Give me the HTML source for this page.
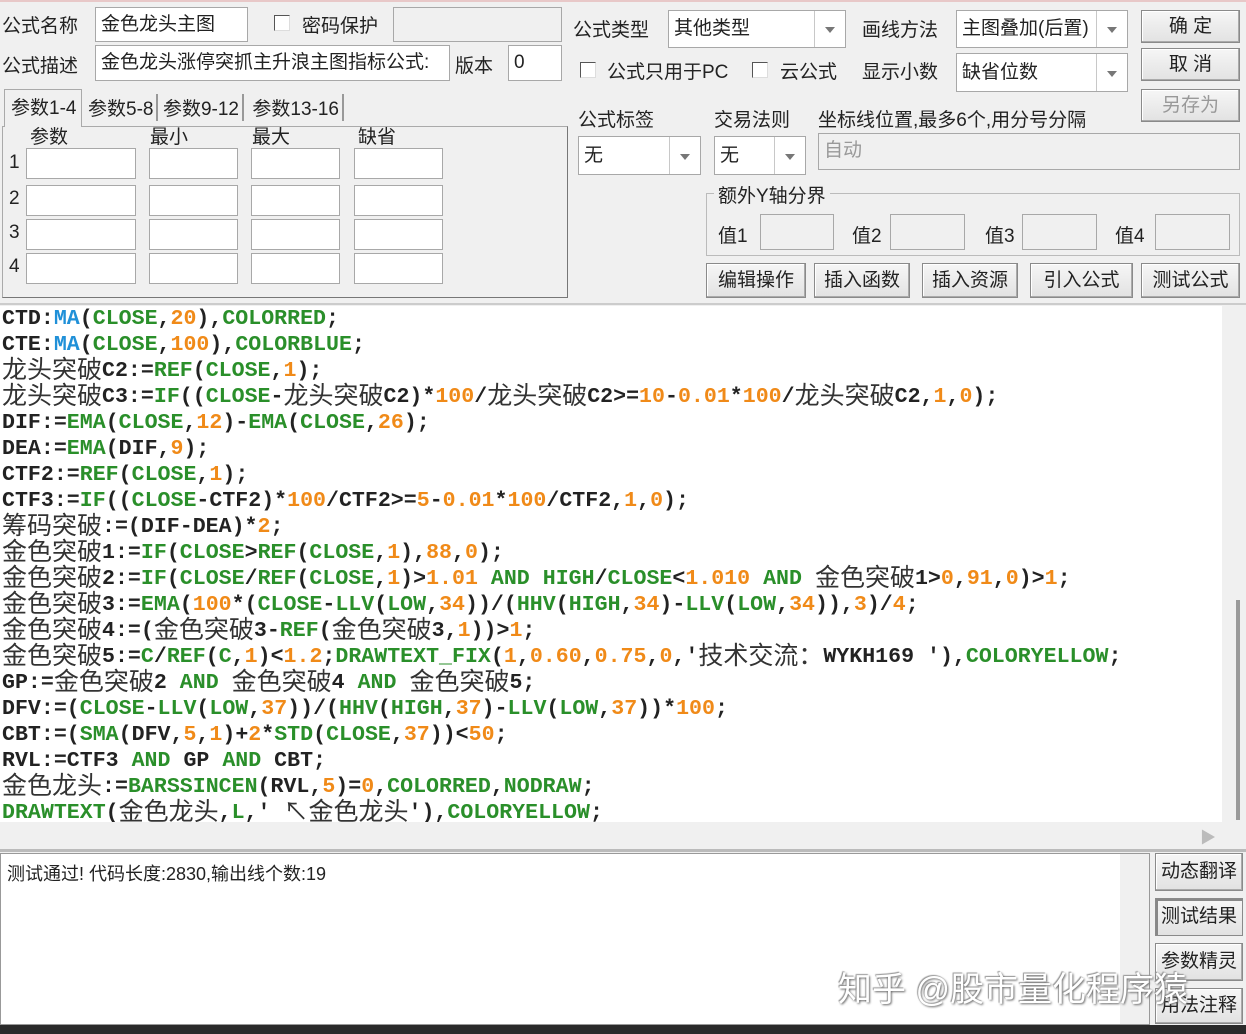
<!DOCTYPE html>
<html><head><meta charset="utf-8"><style>
*{box-sizing:border-box;margin:0;padding:0}
body{width:1246px;height:1034px;background:#f0f0f0;position:relative;overflow:hidden;font-family:"Liberation Sans","Noto Sans CJK SC",sans-serif;font-size:19px;color:#222}
.a{position:absolute;white-space:nowrap}
.in{position:absolute;background:#fff;border:1px solid #a8a8a8;padding:2px 5px;font-size:19px;line-height:30px}
.dis{background:#f0f0f0;color:#999}
.sel{position:absolute;background:#fff;border:1px solid #a8a8a8;font-size:19px;padding-left:5px}
.sel:after{content:"";position:absolute;right:0;top:0;bottom:0;width:30px;border-left:1px solid #c8c8c8;background:#fff}
.sel i{position:absolute;right:10px;top:50%;margin-top:-2px;border:5px solid transparent;border-top:6px solid #777;z-index:2}
.btn{position:absolute;background:linear-gradient(#f6f6f6,#e2e2e2);border:1px solid #8a8a8a;box-shadow:inset -1px -1px 0 #aaa,inset 1px 1px 0 #fff;text-align:center;font-size:19px}
.cb{position:absolute;width:16px;height:16px;border:1px solid #555;background:#fff;border-right-color:#ddd;border-bottom-color:#ddd}
#code{position:absolute;left:0;top:306px;width:1222px;height:516px;background:#fff;overflow:hidden;font-family:"Liberation Mono",monospace;font-weight:bold;font-size:21.6px;line-height:26px;color:#222;padding-left:2px}
#code div{height:26px;white-space:pre;overflow:visible}
.c{font-family:"Noto Sans CJK SC",sans-serif;font-weight:normal;font-size:25px;color:#333;line-height:0;vertical-align:-2px}
.g{color:#2a8f2a}.o{color:#f08a18}.b{color:#2090d8}
.p1{left:26px;width:110px}.p2{left:149px;width:89px}.p3{left:251px;width:89px}.p4{left:354px;width:89px}
.r1{top:148px;height:31px}.r2{top:185px;height:31px}.r3{top:219px;height:31px}.r4{top:253px;height:31px}
</style></head><body>
<div style="position:absolute;left:0;top:0;width:1246px;height:2px;background:#e8c8c8"></div>
<div class="a" style="left:2px;top:11px">公式名称</div>
<div class="in" style="left:95px;top:7px;width:153px;height:35px">金色龙头主图</div>
<div class="cb" style="left:274px;top:15px"></div>
<div class="a" style="left:302px;top:11px">密码保护</div>
<div class="in dis" style="left:393px;top:7px;width:169px;height:35px"></div>
<div class="a" style="left:2px;top:51px">公式描述</div>
<div class="in" style="left:95px;top:45px;width:355px;height:36px">金色龙头涨停突抓主升浪主图指标公式:</div>
<div class="a" style="left:455px;top:51px">版本</div>
<div class="in" style="left:508px;top:45px;width:54px;height:36px">0</div>
<div style="position:absolute;left:2px;top:126px;width:566px;height:172px;border:1px solid #aaa;border-right-color:#777;border-bottom-color:#777"></div>
<div class="a" style="left:4px;top:89px;width:78px;height:38px;background:#f0f0f0;border:1px solid #aaa;border-bottom:none;padding:3px 6px">参数1-4</div>
<div class="a" style="left:88px;top:94px;border-right:2px solid #999;width:70px;text-align:right;padding-right:3px">参数5-8</div>
<div class="a" style="left:160px;top:94px;border-right:2px solid #999;width:84px;text-align:right;padding-right:3px">参数9-12</div>
<div class="a" style="left:246px;top:94px;border-right:2px solid #999;width:98px;text-align:right;padding-right:3px">参数13-16</div>
<div class="a" style="left:30px;top:122px">参数</div>
<div class="a" style="left:150px;top:122px">最小</div>
<div class="a" style="left:252px;top:122px">最大</div>
<div class="a" style="left:358px;top:122px">缺省</div>
<div class="a" style="left:9px;top:152px">1</div><div class="a" style="left:9px;top:188px">2</div><div class="a" style="left:9px;top:222px">3</div><div class="a" style="left:9px;top:256px">4</div>
<div class="in p1 r1"></div><div class="in p2 r1"></div><div class="in p3 r1"></div><div class="in p4 r1"></div>
<div class="in p1 r2"></div><div class="in p2 r2"></div><div class="in p3 r2"></div><div class="in p4 r2"></div>
<div class="in p1 r3"></div><div class="in p2 r3"></div><div class="in p3 r3"></div><div class="in p4 r3"></div>
<div class="in p1 r4"></div><div class="in p2 r4"></div><div class="in p3 r4"></div><div class="in p4 r4"></div>
<div class="a" style="left:573px;top:15px">公式类型</div>
<div class="sel" style="left:668px;top:10px;width:178px;height:38px;line-height:36px">其他类型<i></i></div>
<div class="a" style="left:862px;top:15px">画线方法</div>
<div class="sel" style="left:956px;top:10px;width:172px;height:38px;line-height:36px">主图叠加(后置)<i></i></div>
<div class="btn" style="left:1141px;top:10px;width:99px;height:33px;line-height:31px">确 定</div>
<div class="btn" style="left:1141px;top:48px;width:99px;height:33px;line-height:31px">取 消</div>
<div class="btn" style="left:1141px;top:89px;width:99px;height:33px;line-height:31px;color:#999">另存为</div>
<div class="cb" style="left:580px;top:62px"></div>
<div class="a" style="left:607px;top:57px">公式只用于PC</div>
<div class="cb" style="left:752px;top:62px"></div>
<div class="a" style="left:780px;top:57px">云公式</div>
<div class="a" style="left:862px;top:57px">显示小数</div>
<div class="sel" style="left:956px;top:53px;width:172px;height:39px;line-height:38px">缺省位数<i></i></div>
<div class="a" style="left:578px;top:105px">公式标签</div>
<div class="a" style="left:714px;top:105px">交易法则</div>
<div class="a" style="left:818px;top:105px">坐标线位置,最多6个,用分号分隔</div>
<div class="sel" style="left:578px;top:136px;width:123px;height:39px;line-height:38px">无<i></i></div>
<div class="sel" style="left:714px;top:136px;width:92px;height:39px;line-height:38px">无<i></i></div>
<div class="in dis" style="left:818px;top:133px;width:422px;height:37px">自动</div>
<div style="position:absolute;left:706px;top:193px;width:534px;height:63px;border:1px solid #bbb"></div>
<div class="a" style="left:714px;top:181px;background:#f0f0f0;padding:0 4px">额外Y轴分界</div>
<div class="a" style="left:718px;top:221px">值1</div><div class="in dis" style="left:760px;top:214px;width:74px;height:36px"></div>
<div class="a" style="left:852px;top:221px">值2</div><div class="in dis" style="left:890px;top:214px;width:75px;height:36px"></div>
<div class="a" style="left:985px;top:221px">值3</div><div class="in dis" style="left:1022px;top:214px;width:75px;height:36px"></div>
<div class="a" style="left:1115px;top:221px">值4</div><div class="in dis" style="left:1155px;top:214px;width:75px;height:36px"></div>
<div class="btn" style="left:706px;top:263px;width:100px;height:35px;line-height:33px">编辑操作</div>
<div class="btn" style="left:814px;top:263px;width:96px;height:35px;line-height:33px">插入函数</div>
<div class="btn" style="left:922px;top:263px;width:96px;height:35px;line-height:33px">插入资源</div>
<div class="btn" style="left:1030px;top:263px;width:103px;height:35px;line-height:33px">引入公式</div>
<div class="btn" style="left:1141px;top:263px;width:99px;height:35px;line-height:33px">测试公式</div>
<div style="position:absolute;left:0;top:303px;width:1246px;height:2px;background:#ccc"></div>
<div id="code">
<div>CTD:<span class="b">MA</span>(<span class="g">CLOSE</span>,<span class="o">20</span>),<span class="g">COLORRED</span>;</div>
<div>CTE:<span class="b">MA</span>(<span class="g">CLOSE</span>,<span class="o">100</span>),<span class="g">COLORBLUE</span>;</div>
<div><span class="c">龙头突破</span>C2:=<span class="g">REF</span>(<span class="g">CLOSE</span>,<span class="o">1</span>);</div>
<div><span class="c">龙头突破</span>C3:=<span class="g">IF</span>((<span class="g">CLOSE</span>-<span class="c">龙头突破</span>C2)*<span class="o">100</span>/<span class="c">龙头突破</span>C2&gt;=<span class="o">10</span>-<span class="o">0.01</span>*<span class="o">100</span>/<span class="c">龙头突破</span>C2,<span class="o">1</span>,<span class="o">0</span>);</div>
<div>DIF:=<span class="g">EMA</span>(<span class="g">CLOSE</span>,<span class="o">12</span>)-<span class="g">EMA</span>(<span class="g">CLOSE</span>,<span class="o">26</span>);</div>
<div>DEA:=<span class="g">EMA</span>(DIF,<span class="o">9</span>);</div>
<div>CTF2:=<span class="g">REF</span>(<span class="g">CLOSE</span>,<span class="o">1</span>);</div>
<div>CTF3:=<span class="g">IF</span>((<span class="g">CLOSE</span>-CTF2)*<span class="o">100</span>/CTF2&gt;=<span class="o">5</span>-<span class="o">0.01</span>*<span class="o">100</span>/CTF2,<span class="o">1</span>,<span class="o">0</span>);</div>
<div><span class="c">筹码突破</span>:=(DIF-DEA)*<span class="o">2</span>;</div>
<div><span class="c">金色突破</span>1:=<span class="g">IF</span>(<span class="g">CLOSE</span>&gt;<span class="g">REF</span>(<span class="g">CLOSE</span>,<span class="o">1</span>),<span class="o">88</span>,<span class="o">0</span>);</div>
<div><span class="c">金色突破</span>2:=<span class="g">IF</span>(<span class="g">CLOSE</span>/<span class="g">REF</span>(<span class="g">CLOSE</span>,<span class="o">1</span>)&gt;<span class="o">1.01</span> <span class="g">AND</span> <span class="g">HIGH</span>/<span class="g">CLOSE</span>&lt;<span class="o">1.010</span> <span class="g">AND</span> <span class="c">金色突破</span>1&gt;<span class="o">0</span>,<span class="o">91</span>,<span class="o">0</span>)&gt;<span class="o">1</span>;</div>
<div><span class="c">金色突破</span>3:=<span class="g">EMA</span>(<span class="o">100</span>*(<span class="g">CLOSE</span>-<span class="g">LLV</span>(<span class="g">LOW</span>,<span class="o">34</span>))/(<span class="g">HHV</span>(<span class="g">HIGH</span>,<span class="o">34</span>)-<span class="g">LLV</span>(<span class="g">LOW</span>,<span class="o">34</span>)),<span class="o">3</span>)/<span class="o">4</span>;</div>
<div><span class="c">金色突破</span>4:=(<span class="c">金色突破</span>3-<span class="g">REF</span>(<span class="c">金色突破</span>3,<span class="o">1</span>))&gt;<span class="o">1</span>;</div>
<div><span class="c">金色突破</span>5:=<span class="g">C</span>/<span class="g">REF</span>(<span class="g">C</span>,<span class="o">1</span>)&lt;<span class="o">1.2</span>;<span class="g">DRAWTEXT_FIX</span>(<span class="o">1</span>,<span class="o">0.60</span>,<span class="o">0.75</span>,<span class="o">0</span>,'<span class="c">技术交流：</span>WYKH169 '),<span class="g">COLORYELLOW</span>;</div>
<div>GP:=<span class="c">金色突破</span>2 <span class="g">AND</span> <span class="c">金色突破</span>4 <span class="g">AND</span> <span class="c">金色突破</span>5;</div>
<div>DFV:=(<span class="g">CLOSE</span>-<span class="g">LLV</span>(<span class="g">LOW</span>,<span class="o">37</span>))/(<span class="g">HHV</span>(<span class="g">HIGH</span>,<span class="o">37</span>)-<span class="g">LLV</span>(<span class="g">LOW</span>,<span class="o">37</span>))*<span class="o">100</span>;</div>
<div>CBT:=(<span class="g">SMA</span>(DFV,<span class="o">5</span>,<span class="o">1</span>)+<span class="o">2</span>*<span class="g">STD</span>(<span class="g">CLOSE</span>,<span class="o">37</span>))&lt;<span class="o">50</span>;</div>
<div>RVL:=CTF3 <span class="g">AND</span> GP <span class="g">AND</span> CBT;</div>
<div><span class="c">金色龙头</span>:=<span class="g">BARSSINCEN</span>(RVL,<span class="o">5</span>)=<span class="o">0</span>,<span class="g">COLORRED</span>,<span class="g">NODRAW</span>;</div>
<div><span class="g">DRAWTEXT</span>(<span class="c">金色龙头</span>,<span class="g">L</span>,' <span class="c">↖金色龙头</span>'),<span class="g">COLORYELLOW</span>;</div>
</div>
<div style="position:absolute;left:1222px;top:306px;width:24px;height:516px;background:#f0f0f0"></div>
<div style="position:absolute;left:1236px;top:600px;width:4px;height:220px;background:#999"></div>
<div style="position:absolute;left:0;top:822px;width:1222px;height:26px;background:#f0f0f0"></div>
<div class="a" style="left:1200px;top:824px;color:#bbb;font-size:16px">▶</div>
<div style="position:absolute;left:0;top:849px;width:1246px;height:3px;background:#bbb"></div>
<div style="position:absolute;left:0;top:853px;width:1150px;height:172px;background:#fff;border:1px solid #999"></div>
<div class="a" style="left:7px;top:860px;font-size:18px">测试通过! 代码长度:2830,输出线个数:19</div>
<div style="position:absolute;left:1120px;top:854px;width:29px;height:170px;background:#f0f0f0"></div>
<div class="btn" style="left:1155px;top:853px;width:88px;height:38px;line-height:36px">动态翻译</div>
<div class="btn" style="left:1155px;top:898px;width:88px;height:38px;line-height:36px;box-shadow:inset 2px 2px 0 #888">测试结果</div>
<div class="btn" style="left:1155px;top:943px;width:88px;height:38px;line-height:36px">参数精灵</div>
<div class="btn" style="left:1155px;top:988px;width:88px;height:36px;line-height:34px">用法注释</div>
<div class="a" style="left:838px;top:962px;font-size:34px;color:#fff;text-shadow:1px 1px 2px #666,-1px -1px 1px #999">知乎 @股市量化程序猿</div>
<div style="position:absolute;left:0;top:1025px;width:1246px;height:9px;background:#2a2a2a"></div>
</body></html>
